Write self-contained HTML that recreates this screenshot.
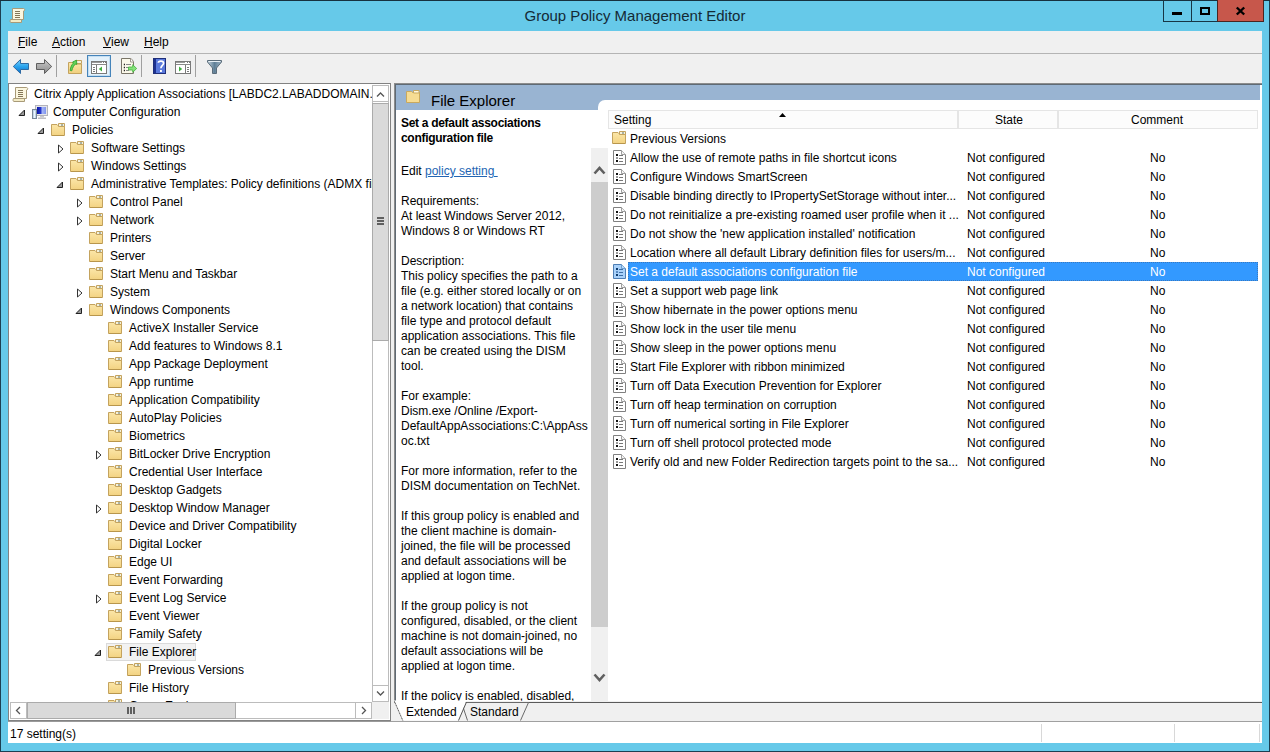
<!DOCTYPE html>
<html><head><meta charset="utf-8"><style>
*{margin:0;padding:0;box-sizing:border-box}
html,body{width:1270px;height:752px;overflow:hidden}
body{position:relative;background:#66c9e9;font-family:"Liberation Sans", sans-serif;font-size:12px;color:#000}
.a{position:absolute}
.ic{position:absolute;display:block}
.tt{position:absolute;margin-top:1px;height:18px;line-height:18px;white-space:nowrap}
.lt{position:absolute;margin-top:1px;height:19px;line-height:19px;white-space:nowrap}
.dt{position:absolute;margin-top:1px;left:401px;height:15px;line-height:15px;white-space:nowrap}
.mn{position:absolute;top:31px;height:22px;line-height:22px}
.mn u{text-decoration:none;border-bottom:1px solid #000;display:inline-block;line-height:10px}
</style></head><body>
<!-- window frame -->
<div class="a" style="left:0;top:0;width:1270px;height:752px;border:1px solid #1c3f52"></div>
<div class="a" style="left:0;top:0;width:1270px;height:1px;background:#17313f"></div>
<!-- title icon -->
<svg class="ic" style="left:9px;top:7px" width="17" height="17" viewBox="0 0 17 17"><path d="M3.5 1.5H14.5C15.5 1.5 16 2.5 15.5 3.5L14.5 4V12.5H3.5Z" fill="#fcf7e0" stroke="#a89a78"/><path d="M1.5 12.5H12.5V15.5H2C1 15.5 0.8 14 1.5 12.5Z" fill="#f3ebc6" stroke="#a89a78"/><path d="M6 4.5h5M6 6.5h5M6 8.5h5M6 10.5h5" stroke="#857758" stroke-width="1.2"/></svg>
<div class="a" style="left:0;top:6px;width:1270px;text-align:center;font-size:15px;line-height:20px;color:#142a36">Group Policy Management Editor</div>
<!-- caption buttons -->
<div class="a" style="left:1163px;top:0;width:29px;height:22px;border:1px solid #173645;border-top:none"></div>
<div class="a" style="left:1172px;top:12px;width:10px;height:3px;background:#000"></div>
<div class="a" style="left:1191px;top:0;width:27px;height:22px;border:1px solid #173645;border-top:none"></div>
<div class="a" style="left:1200px;top:7px;width:10px;height:8px;border:2px solid #000"></div>
<div class="a" style="left:1217px;top:0;width:47px;height:22px;background:#c7574b;border:1px solid #4a2420;border-top:none"></div>
<svg class="ic" style="left:1235px;top:6px" width="11" height="10" viewBox="0 0 11 10"><path d="M1.8 1.5l7.4 7M9.2 1.5l-7.4 7" stroke="#000" stroke-width="2.4"/></svg>

<!-- client -->
<div class="a" style="left:8px;top:31px;width:1254px;height:712px;background:#f0f0f0"></div>
<!-- menu -->
<div class="a" style="left:8px;top:53px;width:1254px;height:1px;background:#b4b4b4"></div>
<div class="mn" style="left:18px"><u>F</u>ile</div>
<div class="mn" style="left:52px"><u>A</u>ction</div>
<div class="mn" style="left:103px"><u>V</u>iew</div>
<div class="mn" style="left:144px"><u>H</u>elp</div>
<!-- toolbar -->
<!-- back -->
<svg class="ic" style="left:10px;top:56px" width="22" height="20" viewBox="10 56 22 20"><defs><linearGradient id="gb" x1="0" y1="0" x2="0" y2="1"><stop offset="0" stop-color="#7fd0fa"/><stop offset="0.5" stop-color="#2aa4ee"/><stop offset="1" stop-color="#0d6fc9"/></linearGradient></defs><path d="M13.3 66.5L20.5 59.5V63.5H28.5V69.5H20.5V73.5Z" fill="url(#gb)" stroke="#2f6aa3" stroke-linejoin="round"/></svg>
<!-- forward -->
<svg class="ic" style="left:33px;top:56px" width="22" height="20" viewBox="33 56 22 20"><defs><linearGradient id="gf" x1="0" y1="0" x2="0" y2="1"><stop offset="0" stop-color="#c9c9c9"/><stop offset="1" stop-color="#8a8a8a"/></linearGradient></defs><path d="M51.7 66.5L44.5 59.5V63.5H36.5V69.5H44.5V73.5Z" fill="url(#gf)" stroke="#5e5e5e" stroke-linejoin="round"/></svg>
<div class="a" style="left:56px;top:55px;width:1px;height:22px;background:#a0a0a0"></div>
<!-- folder up -->
<svg class="ic" style="left:66px;top:57px" width="18" height="18" viewBox="66 57 18 18"><defs><linearGradient id="gy" x1="0" y1="0" x2="0" y2="1"><stop offset="0" stop-color="#fbe6a8"/><stop offset="1" stop-color="#f0cf7e"/></linearGradient></defs><path d="M75.5 60.5H81.5V63.5H75.5Z" fill="#f4f1dc" stroke="#c4a35e"/><path d="M68.5 62.5H73L74.5 64H81.5V73.5H68.5Z" fill="url(#gy)" stroke="#c4a35e"/><path d="M70.2 70.5C70.5 67 71.8 64.5 73.5 63L72.6 62L76.5 60.2L76.8 64.4L75.6 63.9C74 65.2 72.5 67.5 71.8 70.8Z" fill="#62d65a" stroke="#34a32f" stroke-width="0.9" stroke-linejoin="round"/></svg>
<!-- pressed show/hide tree -->
<div class="a" style="left:87px;top:55px;width:24px;height:22px;background:#e3f1fb;border:1px solid #4584ba;box-shadow:inset 0 0 0 1px #c4def2"></div>
<svg class="ic" style="left:90px;top:60px" width="18" height="15" viewBox="90 60 18 15"><rect x="91.5" y="61.5" width="15" height="12" fill="#fff" stroke="#7a7a7a"/><path d="M92 62.5h10" stroke="#9a9a9a"/><path d="M92 64.5h14" stroke="#8a8a8a"/><rect x="103" y="62" width="1" height="1" fill="#777"/><rect x="105" y="62" width="1" height="1" fill="#777"/><path d="M96.5 65v8" stroke="#7a7a7a"/><path d="M93 67.5h2M93 69.5h2M93 71.5h2" stroke="#7a7a7a"/><path d="M102 66.5v5l-3.2-2.5z" fill="#3fae3f"/></svg>
<!-- export list -->
<svg class="ic" style="left:119px;top:56px" width="20" height="19" viewBox="119 56 20 19"><path d="M121.5 58.5h9.5l2.5 3v12h-12z" fill="#fbf8ea" stroke="#7a7568"/><path d="M130.5 58.5v3.5h3" fill="#fff" stroke="#a09a90"/><path d="M123.8 64.5h1.2M123.8 67.5h1.2M123.8 70.5h1.2" stroke="#222" stroke-width="1.3"/><path d="M126 64.5h5M126 67.5h3M126 70.5h3" stroke="#888"/><path d="M128.5 67h4.2v-2.3l4 3.8-4 3.8v-2.3h-4.2z" fill="#84e27a" stroke="#46b03e" stroke-width="0.8" stroke-linejoin="round"/></svg>
<div class="a" style="left:141px;top:55px;width:1px;height:22px;background:#a0a0a0"></div>
<!-- help -->
<svg class="ic" style="left:152px;top:57px" width="16" height="18" viewBox="152 57 16 18"><rect x="153" y="58" width="13" height="16" fill="#3f5cc8"/><rect x="153" y="58" width="3" height="16" fill="#1d318f"/><rect x="156" y="58" width="10" height="16" fill="#5a79dc"/><rect x="153.5" y="58.5" width="12" height="15" fill="none" stroke="#1f2f7a"/><path d="M158.3 62.8C158.3 60.6 163.6 60.2 163.6 63.2C163.6 65.3 160.9 65.6 160.9 68.3" fill="none" stroke="#fff" stroke-width="1.7"/><rect x="160" y="70" width="1.9" height="2" fill="#fff"/></svg>
<!-- action pane -->
<svg class="ic" style="left:174px;top:60px" width="18" height="15" viewBox="174 60 18 15"><rect x="175.5" y="61.5" width="15" height="12" fill="#fff" stroke="#7a7a7a"/><path d="M176 62.5h9" stroke="#9a9a9a"/><path d="M176 64.5h14" stroke="#8a8a8a"/><rect x="187" y="62" width="1" height="1" fill="#777"/><rect x="189" y="62" width="1" height="1" fill="#777"/><path d="M185.5 65v8" stroke="#7a7a7a"/><path d="M187 67.5h2M187 69.5h2M187 71.5h2" stroke="#7a7a7a"/><path d="M179 66.5v5l3.2-2.5z" fill="#3fae3f"/></svg>
<div class="a" style="left:195px;top:55px;width:1px;height:22px;background:#a0a0a0"></div>
<!-- filter -->
<svg class="ic" style="left:205px;top:58px" width="19" height="17" viewBox="205 58 19 17"><defs><linearGradient id="gfl" x1="0" y1="0" x2="1" y2="0"><stop offset="0" stop-color="#c8d6e0"/><stop offset="0.5" stop-color="#5f7f96"/><stop offset="1" stop-color="#9fb4c4"/></linearGradient></defs><path d="M207.5 60.5h14v1.5l-5 6v5.5h-4v-5.5l-5-6z" fill="url(#gfl)" stroke="#5a6c7a" stroke-linejoin="round"/><path d="M208.5 61.5h12" stroke="#e8f0f5"/></svg>


<!-- tree pane -->
<div class="a" style="left:8px;top:83px;width:383px;height:638px;background:#fff;border:1px solid #828282"></div>
<div class="a" style="left:9px;top:84px;width:363px;height:618px;overflow:hidden">
<div class="a" style="left:-9px;top:-84px;width:1270px;height:752px">
<svg class="ic" style="left:12px;top:86px" width="17" height="17" viewBox="0 0 17 17"><path d="M3.5 1.5H14.5C15.5 1.5 16 2.5 15.5 3.5L14.5 4V12.5H3.5Z" fill="#fcf7e0" stroke="#a89a78"/><path d="M1.5 12.5H12.5V15.5H2C1 15.5 0.8 14 1.5 12.5Z" fill="#f3ebc6" stroke="#a89a78"/><path d="M6 4.5h5M6 6.5h5M6 8.5h5M6 10.5h5" stroke="#857758" stroke-width="1.2"/></svg>
<div class="tt" style="left:34px;top:84px">Citrix Apply Application Associations [LABDC2.LABADDOMAIN.COM] Policy</div>
<svg class="ic" style="left:18px;top:109px" width="8" height="8" viewBox="0 0 8 8"><path d="M1 6.5h5.5v-5.5z" fill="#9a9a9a" stroke="#222"/></svg>
<svg class="ic" style="left:32px;top:105px" width="17" height="15" viewBox="0 0 17 15"><defs><linearGradient id="pcs" x1="0" y1="0" x2="1" y2="0"><stop offset="0" stop-color="#0a17a8"/><stop offset="0.45" stop-color="#2a3cd0"/><stop offset="0.55" stop-color="#a9b8f5"/><stop offset="1" stop-color="#7f95ee"/></linearGradient></defs><rect x="3.5" y="0.5" width="12" height="10" fill="#e6e6ea" stroke="#b4b4bc"/><rect x="5" y="2" width="9" height="7" fill="url(#pcs)"/><rect x="8" y="11" width="4" height="1.5" fill="#c8c8cc"/><rect x="6" y="12.5" width="8" height="1.5" fill="#c0c0c4"/><rect x="0.5" y="4.5" width="4" height="9" fill="#c4d8ea" stroke="#7a8898"/><path d="M2.5 6v7" stroke="#f0f8ff"/></svg>
<div class="tt" style="left:53px;top:102px">Computer Configuration</div>
<svg class="ic" style="left:37px;top:127px" width="8" height="8" viewBox="0 0 8 8"><path d="M1 6.5h5.5v-5.5z" fill="#9a9a9a" stroke="#222"/></svg>
<svg class="ic" style="left:51px;top:123px" width="14" height="13" viewBox="0 0 14 13"><defs><linearGradient id="fg" x1="0" y1="0" x2="0" y2="1"><stop offset="0" stop-color="#fbe6a8"/><stop offset="1" stop-color="#f3d382"/></linearGradient></defs><path d="M0.5 1.5H6L7.5 3H13.5V12.5H0.5Z" fill="url(#fg)" stroke="#c4a35e"/><path d="M7.5 0.5H13.5V3.5H7.5Z" fill="#f4f1dc" stroke="#c4a35e"/><rect x="10" y="1" width="2" height="2" fill="#aab2a4"/><path d="M1 12.5H13" stroke="#b8964c"/></svg>
<div class="tt" style="left:72px;top:120px">Policies</div>
<svg class="ic" style="left:57px;top:144px" width="8" height="10" viewBox="0 0 8 10"><path d="M1.5 1v8l4.5-4z" fill="#fff" stroke="#333"/></svg>
<svg class="ic" style="left:70px;top:141px" width="14" height="13" viewBox="0 0 14 13"><defs><linearGradient id="fg" x1="0" y1="0" x2="0" y2="1"><stop offset="0" stop-color="#fbe6a8"/><stop offset="1" stop-color="#f3d382"/></linearGradient></defs><path d="M0.5 1.5H6L7.5 3H13.5V12.5H0.5Z" fill="url(#fg)" stroke="#c4a35e"/><path d="M7.5 0.5H13.5V3.5H7.5Z" fill="#f4f1dc" stroke="#c4a35e"/><rect x="10" y="1" width="2" height="2" fill="#aab2a4"/><path d="M1 12.5H13" stroke="#b8964c"/></svg>
<div class="tt" style="left:91px;top:138px">Software Settings</div>
<svg class="ic" style="left:57px;top:162px" width="8" height="10" viewBox="0 0 8 10"><path d="M1.5 1v8l4.5-4z" fill="#fff" stroke="#333"/></svg>
<svg class="ic" style="left:70px;top:159px" width="14" height="13" viewBox="0 0 14 13"><defs><linearGradient id="fg" x1="0" y1="0" x2="0" y2="1"><stop offset="0" stop-color="#fbe6a8"/><stop offset="1" stop-color="#f3d382"/></linearGradient></defs><path d="M0.5 1.5H6L7.5 3H13.5V12.5H0.5Z" fill="url(#fg)" stroke="#c4a35e"/><path d="M7.5 0.5H13.5V3.5H7.5Z" fill="#f4f1dc" stroke="#c4a35e"/><rect x="10" y="1" width="2" height="2" fill="#aab2a4"/><path d="M1 12.5H13" stroke="#b8964c"/></svg>
<div class="tt" style="left:91px;top:156px">Windows Settings</div>
<svg class="ic" style="left:56px;top:181px" width="8" height="8" viewBox="0 0 8 8"><path d="M1 6.5h5.5v-5.5z" fill="#9a9a9a" stroke="#222"/></svg>
<svg class="ic" style="left:70px;top:177px" width="14" height="13" viewBox="0 0 14 13"><defs><linearGradient id="fg" x1="0" y1="0" x2="0" y2="1"><stop offset="0" stop-color="#fbe6a8"/><stop offset="1" stop-color="#f3d382"/></linearGradient></defs><path d="M0.5 1.5H6L7.5 3H13.5V12.5H0.5Z" fill="url(#fg)" stroke="#c4a35e"/><path d="M7.5 0.5H13.5V3.5H7.5Z" fill="#f4f1dc" stroke="#c4a35e"/><rect x="10" y="1" width="2" height="2" fill="#aab2a4"/><path d="M1 12.5H13" stroke="#b8964c"/></svg>
<div class="tt" style="left:91px;top:174px">Administrative Templates: Policy definitions (ADMX files) retrieved from the local computer</div>
<svg class="ic" style="left:76px;top:198px" width="8" height="10" viewBox="0 0 8 10"><path d="M1.5 1v8l4.5-4z" fill="#fff" stroke="#333"/></svg>
<svg class="ic" style="left:89px;top:195px" width="14" height="13" viewBox="0 0 14 13"><defs><linearGradient id="fg" x1="0" y1="0" x2="0" y2="1"><stop offset="0" stop-color="#fbe6a8"/><stop offset="1" stop-color="#f3d382"/></linearGradient></defs><path d="M0.5 1.5H6L7.5 3H13.5V12.5H0.5Z" fill="url(#fg)" stroke="#c4a35e"/><path d="M7.5 0.5H13.5V3.5H7.5Z" fill="#f4f1dc" stroke="#c4a35e"/><rect x="10" y="1" width="2" height="2" fill="#aab2a4"/><path d="M1 12.5H13" stroke="#b8964c"/></svg>
<div class="tt" style="left:110px;top:192px">Control Panel</div>
<svg class="ic" style="left:76px;top:216px" width="8" height="10" viewBox="0 0 8 10"><path d="M1.5 1v8l4.5-4z" fill="#fff" stroke="#333"/></svg>
<svg class="ic" style="left:89px;top:213px" width="14" height="13" viewBox="0 0 14 13"><defs><linearGradient id="fg" x1="0" y1="0" x2="0" y2="1"><stop offset="0" stop-color="#fbe6a8"/><stop offset="1" stop-color="#f3d382"/></linearGradient></defs><path d="M0.5 1.5H6L7.5 3H13.5V12.5H0.5Z" fill="url(#fg)" stroke="#c4a35e"/><path d="M7.5 0.5H13.5V3.5H7.5Z" fill="#f4f1dc" stroke="#c4a35e"/><rect x="10" y="1" width="2" height="2" fill="#aab2a4"/><path d="M1 12.5H13" stroke="#b8964c"/></svg>
<div class="tt" style="left:110px;top:210px">Network</div>
<svg class="ic" style="left:89px;top:231px" width="14" height="13" viewBox="0 0 14 13"><defs><linearGradient id="fg" x1="0" y1="0" x2="0" y2="1"><stop offset="0" stop-color="#fbe6a8"/><stop offset="1" stop-color="#f3d382"/></linearGradient></defs><path d="M0.5 1.5H6L7.5 3H13.5V12.5H0.5Z" fill="url(#fg)" stroke="#c4a35e"/><path d="M7.5 0.5H13.5V3.5H7.5Z" fill="#f4f1dc" stroke="#c4a35e"/><rect x="10" y="1" width="2" height="2" fill="#aab2a4"/><path d="M1 12.5H13" stroke="#b8964c"/></svg>
<div class="tt" style="left:110px;top:228px">Printers</div>
<svg class="ic" style="left:89px;top:249px" width="14" height="13" viewBox="0 0 14 13"><defs><linearGradient id="fg" x1="0" y1="0" x2="0" y2="1"><stop offset="0" stop-color="#fbe6a8"/><stop offset="1" stop-color="#f3d382"/></linearGradient></defs><path d="M0.5 1.5H6L7.5 3H13.5V12.5H0.5Z" fill="url(#fg)" stroke="#c4a35e"/><path d="M7.5 0.5H13.5V3.5H7.5Z" fill="#f4f1dc" stroke="#c4a35e"/><rect x="10" y="1" width="2" height="2" fill="#aab2a4"/><path d="M1 12.5H13" stroke="#b8964c"/></svg>
<div class="tt" style="left:110px;top:246px">Server</div>
<svg class="ic" style="left:89px;top:267px" width="14" height="13" viewBox="0 0 14 13"><defs><linearGradient id="fg" x1="0" y1="0" x2="0" y2="1"><stop offset="0" stop-color="#fbe6a8"/><stop offset="1" stop-color="#f3d382"/></linearGradient></defs><path d="M0.5 1.5H6L7.5 3H13.5V12.5H0.5Z" fill="url(#fg)" stroke="#c4a35e"/><path d="M7.5 0.5H13.5V3.5H7.5Z" fill="#f4f1dc" stroke="#c4a35e"/><rect x="10" y="1" width="2" height="2" fill="#aab2a4"/><path d="M1 12.5H13" stroke="#b8964c"/></svg>
<div class="tt" style="left:110px;top:264px">Start Menu and Taskbar</div>
<svg class="ic" style="left:76px;top:288px" width="8" height="10" viewBox="0 0 8 10"><path d="M1.5 1v8l4.5-4z" fill="#fff" stroke="#333"/></svg>
<svg class="ic" style="left:89px;top:285px" width="14" height="13" viewBox="0 0 14 13"><defs><linearGradient id="fg" x1="0" y1="0" x2="0" y2="1"><stop offset="0" stop-color="#fbe6a8"/><stop offset="1" stop-color="#f3d382"/></linearGradient></defs><path d="M0.5 1.5H6L7.5 3H13.5V12.5H0.5Z" fill="url(#fg)" stroke="#c4a35e"/><path d="M7.5 0.5H13.5V3.5H7.5Z" fill="#f4f1dc" stroke="#c4a35e"/><rect x="10" y="1" width="2" height="2" fill="#aab2a4"/><path d="M1 12.5H13" stroke="#b8964c"/></svg>
<div class="tt" style="left:110px;top:282px">System</div>
<svg class="ic" style="left:75px;top:307px" width="8" height="8" viewBox="0 0 8 8"><path d="M1 6.5h5.5v-5.5z" fill="#9a9a9a" stroke="#222"/></svg>
<svg class="ic" style="left:89px;top:303px" width="14" height="13" viewBox="0 0 14 13"><defs><linearGradient id="fg" x1="0" y1="0" x2="0" y2="1"><stop offset="0" stop-color="#fbe6a8"/><stop offset="1" stop-color="#f3d382"/></linearGradient></defs><path d="M0.5 1.5H6L7.5 3H13.5V12.5H0.5Z" fill="url(#fg)" stroke="#c4a35e"/><path d="M7.5 0.5H13.5V3.5H7.5Z" fill="#f4f1dc" stroke="#c4a35e"/><rect x="10" y="1" width="2" height="2" fill="#aab2a4"/><path d="M1 12.5H13" stroke="#b8964c"/></svg>
<div class="tt" style="left:110px;top:300px">Windows Components</div>
<svg class="ic" style="left:108px;top:321px" width="14" height="13" viewBox="0 0 14 13"><defs><linearGradient id="fg" x1="0" y1="0" x2="0" y2="1"><stop offset="0" stop-color="#fbe6a8"/><stop offset="1" stop-color="#f3d382"/></linearGradient></defs><path d="M0.5 1.5H6L7.5 3H13.5V12.5H0.5Z" fill="url(#fg)" stroke="#c4a35e"/><path d="M7.5 0.5H13.5V3.5H7.5Z" fill="#f4f1dc" stroke="#c4a35e"/><rect x="10" y="1" width="2" height="2" fill="#aab2a4"/><path d="M1 12.5H13" stroke="#b8964c"/></svg>
<div class="tt" style="left:129px;top:318px">ActiveX Installer Service</div>
<svg class="ic" style="left:108px;top:339px" width="14" height="13" viewBox="0 0 14 13"><defs><linearGradient id="fg" x1="0" y1="0" x2="0" y2="1"><stop offset="0" stop-color="#fbe6a8"/><stop offset="1" stop-color="#f3d382"/></linearGradient></defs><path d="M0.5 1.5H6L7.5 3H13.5V12.5H0.5Z" fill="url(#fg)" stroke="#c4a35e"/><path d="M7.5 0.5H13.5V3.5H7.5Z" fill="#f4f1dc" stroke="#c4a35e"/><rect x="10" y="1" width="2" height="2" fill="#aab2a4"/><path d="M1 12.5H13" stroke="#b8964c"/></svg>
<div class="tt" style="left:129px;top:336px">Add features to Windows 8.1</div>
<svg class="ic" style="left:108px;top:357px" width="14" height="13" viewBox="0 0 14 13"><defs><linearGradient id="fg" x1="0" y1="0" x2="0" y2="1"><stop offset="0" stop-color="#fbe6a8"/><stop offset="1" stop-color="#f3d382"/></linearGradient></defs><path d="M0.5 1.5H6L7.5 3H13.5V12.5H0.5Z" fill="url(#fg)" stroke="#c4a35e"/><path d="M7.5 0.5H13.5V3.5H7.5Z" fill="#f4f1dc" stroke="#c4a35e"/><rect x="10" y="1" width="2" height="2" fill="#aab2a4"/><path d="M1 12.5H13" stroke="#b8964c"/></svg>
<div class="tt" style="left:129px;top:354px">App Package Deployment</div>
<svg class="ic" style="left:108px;top:375px" width="14" height="13" viewBox="0 0 14 13"><defs><linearGradient id="fg" x1="0" y1="0" x2="0" y2="1"><stop offset="0" stop-color="#fbe6a8"/><stop offset="1" stop-color="#f3d382"/></linearGradient></defs><path d="M0.5 1.5H6L7.5 3H13.5V12.5H0.5Z" fill="url(#fg)" stroke="#c4a35e"/><path d="M7.5 0.5H13.5V3.5H7.5Z" fill="#f4f1dc" stroke="#c4a35e"/><rect x="10" y="1" width="2" height="2" fill="#aab2a4"/><path d="M1 12.5H13" stroke="#b8964c"/></svg>
<div class="tt" style="left:129px;top:372px">App runtime</div>
<svg class="ic" style="left:108px;top:393px" width="14" height="13" viewBox="0 0 14 13"><defs><linearGradient id="fg" x1="0" y1="0" x2="0" y2="1"><stop offset="0" stop-color="#fbe6a8"/><stop offset="1" stop-color="#f3d382"/></linearGradient></defs><path d="M0.5 1.5H6L7.5 3H13.5V12.5H0.5Z" fill="url(#fg)" stroke="#c4a35e"/><path d="M7.5 0.5H13.5V3.5H7.5Z" fill="#f4f1dc" stroke="#c4a35e"/><rect x="10" y="1" width="2" height="2" fill="#aab2a4"/><path d="M1 12.5H13" stroke="#b8964c"/></svg>
<div class="tt" style="left:129px;top:390px">Application Compatibility</div>
<svg class="ic" style="left:108px;top:411px" width="14" height="13" viewBox="0 0 14 13"><defs><linearGradient id="fg" x1="0" y1="0" x2="0" y2="1"><stop offset="0" stop-color="#fbe6a8"/><stop offset="1" stop-color="#f3d382"/></linearGradient></defs><path d="M0.5 1.5H6L7.5 3H13.5V12.5H0.5Z" fill="url(#fg)" stroke="#c4a35e"/><path d="M7.5 0.5H13.5V3.5H7.5Z" fill="#f4f1dc" stroke="#c4a35e"/><rect x="10" y="1" width="2" height="2" fill="#aab2a4"/><path d="M1 12.5H13" stroke="#b8964c"/></svg>
<div class="tt" style="left:129px;top:408px">AutoPlay Policies</div>
<svg class="ic" style="left:108px;top:429px" width="14" height="13" viewBox="0 0 14 13"><defs><linearGradient id="fg" x1="0" y1="0" x2="0" y2="1"><stop offset="0" stop-color="#fbe6a8"/><stop offset="1" stop-color="#f3d382"/></linearGradient></defs><path d="M0.5 1.5H6L7.5 3H13.5V12.5H0.5Z" fill="url(#fg)" stroke="#c4a35e"/><path d="M7.5 0.5H13.5V3.5H7.5Z" fill="#f4f1dc" stroke="#c4a35e"/><rect x="10" y="1" width="2" height="2" fill="#aab2a4"/><path d="M1 12.5H13" stroke="#b8964c"/></svg>
<div class="tt" style="left:129px;top:426px">Biometrics</div>
<svg class="ic" style="left:95px;top:450px" width="8" height="10" viewBox="0 0 8 10"><path d="M1.5 1v8l4.5-4z" fill="#fff" stroke="#333"/></svg>
<svg class="ic" style="left:108px;top:447px" width="14" height="13" viewBox="0 0 14 13"><defs><linearGradient id="fg" x1="0" y1="0" x2="0" y2="1"><stop offset="0" stop-color="#fbe6a8"/><stop offset="1" stop-color="#f3d382"/></linearGradient></defs><path d="M0.5 1.5H6L7.5 3H13.5V12.5H0.5Z" fill="url(#fg)" stroke="#c4a35e"/><path d="M7.5 0.5H13.5V3.5H7.5Z" fill="#f4f1dc" stroke="#c4a35e"/><rect x="10" y="1" width="2" height="2" fill="#aab2a4"/><path d="M1 12.5H13" stroke="#b8964c"/></svg>
<div class="tt" style="left:129px;top:444px">BitLocker Drive Encryption</div>
<svg class="ic" style="left:108px;top:465px" width="14" height="13" viewBox="0 0 14 13"><defs><linearGradient id="fg" x1="0" y1="0" x2="0" y2="1"><stop offset="0" stop-color="#fbe6a8"/><stop offset="1" stop-color="#f3d382"/></linearGradient></defs><path d="M0.5 1.5H6L7.5 3H13.5V12.5H0.5Z" fill="url(#fg)" stroke="#c4a35e"/><path d="M7.5 0.5H13.5V3.5H7.5Z" fill="#f4f1dc" stroke="#c4a35e"/><rect x="10" y="1" width="2" height="2" fill="#aab2a4"/><path d="M1 12.5H13" stroke="#b8964c"/></svg>
<div class="tt" style="left:129px;top:462px">Credential User Interface</div>
<svg class="ic" style="left:108px;top:483px" width="14" height="13" viewBox="0 0 14 13"><defs><linearGradient id="fg" x1="0" y1="0" x2="0" y2="1"><stop offset="0" stop-color="#fbe6a8"/><stop offset="1" stop-color="#f3d382"/></linearGradient></defs><path d="M0.5 1.5H6L7.5 3H13.5V12.5H0.5Z" fill="url(#fg)" stroke="#c4a35e"/><path d="M7.5 0.5H13.5V3.5H7.5Z" fill="#f4f1dc" stroke="#c4a35e"/><rect x="10" y="1" width="2" height="2" fill="#aab2a4"/><path d="M1 12.5H13" stroke="#b8964c"/></svg>
<div class="tt" style="left:129px;top:480px">Desktop Gadgets</div>
<svg class="ic" style="left:95px;top:504px" width="8" height="10" viewBox="0 0 8 10"><path d="M1.5 1v8l4.5-4z" fill="#fff" stroke="#333"/></svg>
<svg class="ic" style="left:108px;top:501px" width="14" height="13" viewBox="0 0 14 13"><defs><linearGradient id="fg" x1="0" y1="0" x2="0" y2="1"><stop offset="0" stop-color="#fbe6a8"/><stop offset="1" stop-color="#f3d382"/></linearGradient></defs><path d="M0.5 1.5H6L7.5 3H13.5V12.5H0.5Z" fill="url(#fg)" stroke="#c4a35e"/><path d="M7.5 0.5H13.5V3.5H7.5Z" fill="#f4f1dc" stroke="#c4a35e"/><rect x="10" y="1" width="2" height="2" fill="#aab2a4"/><path d="M1 12.5H13" stroke="#b8964c"/></svg>
<div class="tt" style="left:129px;top:498px">Desktop Window Manager</div>
<svg class="ic" style="left:108px;top:519px" width="14" height="13" viewBox="0 0 14 13"><defs><linearGradient id="fg" x1="0" y1="0" x2="0" y2="1"><stop offset="0" stop-color="#fbe6a8"/><stop offset="1" stop-color="#f3d382"/></linearGradient></defs><path d="M0.5 1.5H6L7.5 3H13.5V12.5H0.5Z" fill="url(#fg)" stroke="#c4a35e"/><path d="M7.5 0.5H13.5V3.5H7.5Z" fill="#f4f1dc" stroke="#c4a35e"/><rect x="10" y="1" width="2" height="2" fill="#aab2a4"/><path d="M1 12.5H13" stroke="#b8964c"/></svg>
<div class="tt" style="left:129px;top:516px">Device and Driver Compatibility</div>
<svg class="ic" style="left:108px;top:537px" width="14" height="13" viewBox="0 0 14 13"><defs><linearGradient id="fg" x1="0" y1="0" x2="0" y2="1"><stop offset="0" stop-color="#fbe6a8"/><stop offset="1" stop-color="#f3d382"/></linearGradient></defs><path d="M0.5 1.5H6L7.5 3H13.5V12.5H0.5Z" fill="url(#fg)" stroke="#c4a35e"/><path d="M7.5 0.5H13.5V3.5H7.5Z" fill="#f4f1dc" stroke="#c4a35e"/><rect x="10" y="1" width="2" height="2" fill="#aab2a4"/><path d="M1 12.5H13" stroke="#b8964c"/></svg>
<div class="tt" style="left:129px;top:534px">Digital Locker</div>
<svg class="ic" style="left:108px;top:555px" width="14" height="13" viewBox="0 0 14 13"><defs><linearGradient id="fg" x1="0" y1="0" x2="0" y2="1"><stop offset="0" stop-color="#fbe6a8"/><stop offset="1" stop-color="#f3d382"/></linearGradient></defs><path d="M0.5 1.5H6L7.5 3H13.5V12.5H0.5Z" fill="url(#fg)" stroke="#c4a35e"/><path d="M7.5 0.5H13.5V3.5H7.5Z" fill="#f4f1dc" stroke="#c4a35e"/><rect x="10" y="1" width="2" height="2" fill="#aab2a4"/><path d="M1 12.5H13" stroke="#b8964c"/></svg>
<div class="tt" style="left:129px;top:552px">Edge UI</div>
<svg class="ic" style="left:108px;top:573px" width="14" height="13" viewBox="0 0 14 13"><defs><linearGradient id="fg" x1="0" y1="0" x2="0" y2="1"><stop offset="0" stop-color="#fbe6a8"/><stop offset="1" stop-color="#f3d382"/></linearGradient></defs><path d="M0.5 1.5H6L7.5 3H13.5V12.5H0.5Z" fill="url(#fg)" stroke="#c4a35e"/><path d="M7.5 0.5H13.5V3.5H7.5Z" fill="#f4f1dc" stroke="#c4a35e"/><rect x="10" y="1" width="2" height="2" fill="#aab2a4"/><path d="M1 12.5H13" stroke="#b8964c"/></svg>
<div class="tt" style="left:129px;top:570px">Event Forwarding</div>
<svg class="ic" style="left:95px;top:594px" width="8" height="10" viewBox="0 0 8 10"><path d="M1.5 1v8l4.5-4z" fill="#fff" stroke="#333"/></svg>
<svg class="ic" style="left:108px;top:591px" width="14" height="13" viewBox="0 0 14 13"><defs><linearGradient id="fg" x1="0" y1="0" x2="0" y2="1"><stop offset="0" stop-color="#fbe6a8"/><stop offset="1" stop-color="#f3d382"/></linearGradient></defs><path d="M0.5 1.5H6L7.5 3H13.5V12.5H0.5Z" fill="url(#fg)" stroke="#c4a35e"/><path d="M7.5 0.5H13.5V3.5H7.5Z" fill="#f4f1dc" stroke="#c4a35e"/><rect x="10" y="1" width="2" height="2" fill="#aab2a4"/><path d="M1 12.5H13" stroke="#b8964c"/></svg>
<div class="tt" style="left:129px;top:588px">Event Log Service</div>
<svg class="ic" style="left:108px;top:609px" width="14" height="13" viewBox="0 0 14 13"><defs><linearGradient id="fg" x1="0" y1="0" x2="0" y2="1"><stop offset="0" stop-color="#fbe6a8"/><stop offset="1" stop-color="#f3d382"/></linearGradient></defs><path d="M0.5 1.5H6L7.5 3H13.5V12.5H0.5Z" fill="url(#fg)" stroke="#c4a35e"/><path d="M7.5 0.5H13.5V3.5H7.5Z" fill="#f4f1dc" stroke="#c4a35e"/><rect x="10" y="1" width="2" height="2" fill="#aab2a4"/><path d="M1 12.5H13" stroke="#b8964c"/></svg>
<div class="tt" style="left:129px;top:606px">Event Viewer</div>
<svg class="ic" style="left:108px;top:627px" width="14" height="13" viewBox="0 0 14 13"><defs><linearGradient id="fg" x1="0" y1="0" x2="0" y2="1"><stop offset="0" stop-color="#fbe6a8"/><stop offset="1" stop-color="#f3d382"/></linearGradient></defs><path d="M0.5 1.5H6L7.5 3H13.5V12.5H0.5Z" fill="url(#fg)" stroke="#c4a35e"/><path d="M7.5 0.5H13.5V3.5H7.5Z" fill="#f4f1dc" stroke="#c4a35e"/><rect x="10" y="1" width="2" height="2" fill="#aab2a4"/><path d="M1 12.5H13" stroke="#b8964c"/></svg>
<div class="tt" style="left:129px;top:624px">Family Safety</div>
<svg class="ic" style="left:94px;top:649px" width="8" height="8" viewBox="0 0 8 8"><path d="M1 6.5h5.5v-5.5z" fill="#9a9a9a" stroke="#222"/></svg>
<div style="position:absolute;left:106px;top:643px;width:90px;height:18px;background:#f2f2f2;border:1px solid #dadada"></div>
<svg class="ic" style="left:108px;top:645px" width="14" height="13" viewBox="0 0 14 13"><defs><linearGradient id="fg" x1="0" y1="0" x2="0" y2="1"><stop offset="0" stop-color="#fbe6a8"/><stop offset="1" stop-color="#f3d382"/></linearGradient></defs><path d="M0.5 1.5H6L7.5 3H13.5V12.5H0.5Z" fill="url(#fg)" stroke="#c4a35e"/><path d="M7.5 0.5H13.5V3.5H7.5Z" fill="#f4f1dc" stroke="#c4a35e"/><rect x="10" y="1" width="2" height="2" fill="#aab2a4"/><path d="M1 12.5H13" stroke="#b8964c"/></svg>
<div class="tt" style="left:129px;top:642px">File Explorer</div>
<svg class="ic" style="left:127px;top:663px" width="14" height="13" viewBox="0 0 14 13"><defs><linearGradient id="fg" x1="0" y1="0" x2="0" y2="1"><stop offset="0" stop-color="#fbe6a8"/><stop offset="1" stop-color="#f3d382"/></linearGradient></defs><path d="M0.5 1.5H6L7.5 3H13.5V12.5H0.5Z" fill="url(#fg)" stroke="#c4a35e"/><path d="M7.5 0.5H13.5V3.5H7.5Z" fill="#f4f1dc" stroke="#c4a35e"/><rect x="10" y="1" width="2" height="2" fill="#aab2a4"/><path d="M1 12.5H13" stroke="#b8964c"/></svg>
<div class="tt" style="left:148px;top:660px">Previous Versions</div>
<svg class="ic" style="left:108px;top:681px" width="14" height="13" viewBox="0 0 14 13"><defs><linearGradient id="fg" x1="0" y1="0" x2="0" y2="1"><stop offset="0" stop-color="#fbe6a8"/><stop offset="1" stop-color="#f3d382"/></linearGradient></defs><path d="M0.5 1.5H6L7.5 3H13.5V12.5H0.5Z" fill="url(#fg)" stroke="#c4a35e"/><path d="M7.5 0.5H13.5V3.5H7.5Z" fill="#f4f1dc" stroke="#c4a35e"/><rect x="10" y="1" width="2" height="2" fill="#aab2a4"/><path d="M1 12.5H13" stroke="#b8964c"/></svg>
<div class="tt" style="left:129px;top:678px">File History</div>
<svg class="ic" style="left:108px;top:699px" width="14" height="13" viewBox="0 0 14 13"><defs><linearGradient id="fg" x1="0" y1="0" x2="0" y2="1"><stop offset="0" stop-color="#fbe6a8"/><stop offset="1" stop-color="#f3d382"/></linearGradient></defs><path d="M0.5 1.5H6L7.5 3H13.5V12.5H0.5Z" fill="url(#fg)" stroke="#c4a35e"/><path d="M7.5 0.5H13.5V3.5H7.5Z" fill="#f4f1dc" stroke="#c4a35e"/><rect x="10" y="1" width="2" height="2" fill="#aab2a4"/><path d="M1 12.5H13" stroke="#b8964c"/></svg>
<div class="tt" style="left:129px;top:696px">Game Explorer</div>
</div></div>
<!-- tree vscroll -->
<div class="a" style="left:372px;top:85px;width:17px;height:617px;background:#fff;border-left:1px solid #bcbcbc;border-right:1px solid #bcbcbc"></div>
<div class="a" style="left:372px;top:702px;width:17px;height:17px;background:#f0f0f0"></div>
<div class="a" style="left:372px;top:85px;width:17px;height:17px;background:#fff;border:1px solid #bcbcbc"></div>
<svg class="ic" style="left:376px;top:91px" width="9" height="7" viewBox="0 0 9 7"><path d="M1 5.5l3.5-3.5 3.5 3.5" fill="none" stroke="#555" stroke-width="1.3"/></svg>
<div class="a" style="left:372px;top:103px;width:17px;height:238px;background:#dadada;border:1px solid #ababab"></div>
<div class="a" style="left:377px;top:217px;width:7px;height:2px;background:#606060"></div>
<div class="a" style="left:377px;top:220px;width:7px;height:2px;background:#606060"></div>
<div class="a" style="left:377px;top:223px;width:7px;height:2px;background:#606060"></div>
<div class="a" style="left:372px;top:685px;width:17px;height:17px;background:#fff;border:1px solid #bcbcbc"></div>
<svg class="ic" style="left:376px;top:690px" width="9" height="7" viewBox="0 0 9 7"><path d="M1 1.5l3.5 3.5 3.5-3.5" fill="none" stroke="#555" stroke-width="1.3"/></svg>
<!-- tree hscroll -->
<div class="a" style="left:10px;top:702px;width:362px;height:17px;background:#fff;border-top:1px solid #bcbcbc;border-bottom:1px solid #bcbcbc"></div>
<div class="a" style="left:10px;top:702px;width:17px;height:17px;background:#fff;border:1px solid #bcbcbc"></div>
<svg class="ic" style="left:15px;top:706px" width="6" height="9" viewBox="0 0 6 9"><path d="M5 1l-3.5 3.5 3.5 3.5" fill="none" stroke="#555" stroke-width="1.3"/></svg>
<div class="a" style="left:27px;top:702px;width:209px;height:17px;background:#dadada;border:1px solid #ababab"></div>
<div class="a" style="left:127px;top:707px;width:2px;height:7px;background:#606060"></div>
<div class="a" style="left:130px;top:707px;width:2px;height:7px;background:#606060"></div>
<div class="a" style="left:133px;top:707px;width:2px;height:7px;background:#606060"></div>
<div class="a" style="left:355px;top:702px;width:17px;height:17px;background:#fff;border:1px solid #bcbcbc"></div>
<svg class="ic" style="left:361px;top:706px" width="6" height="9" viewBox="0 0 6 9"><path d="M1 1l3.5 3.5-3.5 3.5" fill="none" stroke="#555" stroke-width="1.3"/></svg>

<!-- right container -->
<div class="a" style="left:394px;top:83px;width:868px;height:620px;background:#fff;border-left:1px solid #8c8c8c;border-top:1px solid #8c8c8c"></div>
<div class="a" style="left:395px;top:84px;width:867px;height:1px;background:#5f6a74"></div>
<div class="a" style="left:395px;top:84px;width:1px;height:617px;background:#5f6a74"></div>
<div class="a" style="left:396px;top:85px;width:864px;height:25px;background:#99b4d2"></div>
<div class="a" style="left:598px;top:100px;width:662px;height:12px;background:#fff;border-top-left-radius:7px"></div>
<svg class="ic" style="left:405px;top:89px" width="16" height="16" viewBox="0 0 16 16"><path d="M1.5 2.5h5l1 1h7v10h-13z" fill="#f6dc93" stroke="#c9a95e"/><path d="M8.5 1.5h5.5v2.5h-5.5z" fill="#fff8e0" stroke="#c9a95e"/></svg>
<div class="a" style="left:431px;top:91px;font-size:15px;line-height:20px;color:#000">File Explorer</div>

<!-- description -->
<div class="a" style="left:396px;top:110px;width:195px;height:591px;overflow:hidden">
<div class="a" style="left:-396px;top:-110px;width:1270px;height:752px">
<div class="dt" style="top:115px;font-weight:bold;letter-spacing:-0.3px">Set a default associations</div>
<div class="dt" style="top:130px;font-weight:bold;letter-spacing:-0.3px">configuration file</div>
<div class="dt" style="top:163px">Edit <span style="color:#2365b3;text-decoration:underline">policy setting&nbsp;</span></div>
<div class="dt" style="top:193px">Requirements:</div>
<div class="dt" style="top:208px">At least Windows Server 2012,</div>
<div class="dt" style="top:223px">Windows 8 or Windows RT</div>
<div class="dt" style="top:253px">Description:</div>
<div class="dt" style="top:268px">This policy specifies the path to a</div>
<div class="dt" style="top:283px">file (e.g. either stored locally or on</div>
<div class="dt" style="top:298px">a network location) that contains</div>
<div class="dt" style="top:313px">file type and protocol default</div>
<div class="dt" style="top:328px">application associations. This file</div>
<div class="dt" style="top:343px">can be created using the DISM</div>
<div class="dt" style="top:358px">tool.</div>
<div class="dt" style="top:388px">For example:</div>
<div class="dt" style="top:403px">Dism.exe /Online /Export-</div>
<div class="dt" style="top:418px">DefaultAppAssociations:C:\AppAss</div>
<div class="dt" style="top:433px">oc.txt</div>
<div class="dt" style="top:463px">For more information, refer to the</div>
<div class="dt" style="top:478px">DISM documentation on TechNet.</div>
<div class="dt" style="top:508px">If this group policy is enabled and</div>
<div class="dt" style="top:523px">the client machine is domain-</div>
<div class="dt" style="top:538px">joined, the file will be processed</div>
<div class="dt" style="top:553px">and default associations will be</div>
<div class="dt" style="top:568px">applied at logon time.</div>
<div class="dt" style="top:598px">If the group policy is not</div>
<div class="dt" style="top:613px">configured, disabled, or the client</div>
<div class="dt" style="top:628px">machine is not domain-joined, no</div>
<div class="dt" style="top:643px">default associations will be</div>
<div class="dt" style="top:658px">applied at logon time.</div>
<div class="dt" style="top:688px">If the policy is enabled, disabled,</div>
</div></div>
<!-- middle vscroll -->
<div class="a" style="left:591px;top:148px;width:17px;height:553px;background:#f0f0f0"></div>
<div class="a" style="left:591px;top:182px;width:17px;height:445px;background:#cdcdcd"></div>
<svg class="ic" style="left:593px;top:164px" width="13" height="11" viewBox="0 0 13 11"><path d="M1.5 9.5l5-5.5 5 5.5" fill="none" stroke="#606060" stroke-width="2.6"/></svg>
<svg class="ic" style="left:593px;top:673px" width="13" height="11" viewBox="0 0 13 11"><path d="M1.5 1.5l5 5.5 5-5.5" fill="none" stroke="#606060" stroke-width="2.6"/></svg>

<!-- list header -->
<div class="a" style="left:608px;top:110px;width:650px;height:19px;background:#fcfcfc;border:1px solid #e5e5e5"></div>
<div class="a" style="left:957px;top:110px;width:2px;height:19px;background:#e5e5e5"></div>
<div class="a" style="left:1057px;top:110px;width:2px;height:19px;background:#e5e5e5"></div>
<div class="lt" style="left:614px;top:110px">Setting</div>
<div class="lt" style="left:995px;top:110px">State</div>
<div class="lt" style="left:1131px;top:110px">Comment</div>
<svg class="ic" style="left:779px;top:113px" width="7" height="4" viewBox="0 0 7 4"><path d="M0 4l3.5-4 3.5 4z" fill="#000"/></svg>
<svg class="ic" style="left:612px;top:131px" width="14" height="13" viewBox="0 0 14 13"><defs><linearGradient id="fg" x1="0" y1="0" x2="0" y2="1"><stop offset="0" stop-color="#fbe6a8"/><stop offset="1" stop-color="#f3d382"/></linearGradient></defs><path d="M0.5 1.5H6L7.5 3H13.5V12.5H0.5Z" fill="url(#fg)" stroke="#c4a35e"/><path d="M7.5 0.5H13.5V3.5H7.5Z" fill="#f4f1dc" stroke="#c4a35e"/><rect x="10" y="1" width="2" height="2" fill="#aab2a4"/><path d="M1 12.5H13" stroke="#b8964c"/></svg>
<div class="lt" style="left:630px;top:129px">Previous Versions</div>
<svg class="ic" style="left:613px;top:150px" width="14" height="16" viewBox="0 0 14 16"><path d="M0.5 0.5h8l4 4v10h-12z" fill="#fff" stroke="#808080"/><path d="M8.5 0.5v4h4" fill="#f4f4f4" stroke="#a0a0a0"/><rect x="3" y="4" width="2" height="2" fill="#111"/><rect x="3" y="7" width="2" height="2" fill="#999"/><rect x="3" y="10" width="2" height="2" fill="#111"/><rect x="6" y="5" width="4" height="1" fill="#777"/><rect x="6" y="8" width="4" height="1" fill="#777"/><rect x="6" y="11" width="4" height="1" fill="#777"/></svg>
<div class="lt" style="left:630px;top:148px;color:#000">Allow the use of remote paths in file shortcut icons</div>
<div class="lt" style="left:967px;top:148px;color:#000">Not configured</div>
<div class="lt" style="left:1150px;top:148px;color:#000">No</div>
<svg class="ic" style="left:613px;top:169px" width="14" height="16" viewBox="0 0 14 16"><path d="M0.5 0.5h8l4 4v10h-12z" fill="#fff" stroke="#808080"/><path d="M8.5 0.5v4h4" fill="#f4f4f4" stroke="#a0a0a0"/><rect x="3" y="4" width="2" height="2" fill="#111"/><rect x="3" y="7" width="2" height="2" fill="#999"/><rect x="3" y="10" width="2" height="2" fill="#111"/><rect x="6" y="5" width="4" height="1" fill="#777"/><rect x="6" y="8" width="4" height="1" fill="#777"/><rect x="6" y="11" width="4" height="1" fill="#777"/></svg>
<div class="lt" style="left:630px;top:167px;color:#000">Configure Windows SmartScreen</div>
<div class="lt" style="left:967px;top:167px;color:#000">Not configured</div>
<div class="lt" style="left:1150px;top:167px;color:#000">No</div>
<svg class="ic" style="left:613px;top:188px" width="14" height="16" viewBox="0 0 14 16"><path d="M0.5 0.5h8l4 4v10h-12z" fill="#fff" stroke="#808080"/><path d="M8.5 0.5v4h4" fill="#f4f4f4" stroke="#a0a0a0"/><rect x="3" y="4" width="2" height="2" fill="#111"/><rect x="3" y="7" width="2" height="2" fill="#999"/><rect x="3" y="10" width="2" height="2" fill="#111"/><rect x="6" y="5" width="4" height="1" fill="#777"/><rect x="6" y="8" width="4" height="1" fill="#777"/><rect x="6" y="11" width="4" height="1" fill="#777"/></svg>
<div class="lt" style="left:630px;top:186px;color:#000">Disable binding directly to IPropertySetStorage without inter...</div>
<div class="lt" style="left:967px;top:186px;color:#000">Not configured</div>
<div class="lt" style="left:1150px;top:186px;color:#000">No</div>
<svg class="ic" style="left:613px;top:207px" width="14" height="16" viewBox="0 0 14 16"><path d="M0.5 0.5h8l4 4v10h-12z" fill="#fff" stroke="#808080"/><path d="M8.5 0.5v4h4" fill="#f4f4f4" stroke="#a0a0a0"/><rect x="3" y="4" width="2" height="2" fill="#111"/><rect x="3" y="7" width="2" height="2" fill="#999"/><rect x="3" y="10" width="2" height="2" fill="#111"/><rect x="6" y="5" width="4" height="1" fill="#777"/><rect x="6" y="8" width="4" height="1" fill="#777"/><rect x="6" y="11" width="4" height="1" fill="#777"/></svg>
<div class="lt" style="left:630px;top:205px;color:#000">Do not reinitialize a pre-existing roamed user profile when it ...</div>
<div class="lt" style="left:967px;top:205px;color:#000">Not configured</div>
<div class="lt" style="left:1150px;top:205px;color:#000">No</div>
<svg class="ic" style="left:613px;top:226px" width="14" height="16" viewBox="0 0 14 16"><path d="M0.5 0.5h8l4 4v10h-12z" fill="#fff" stroke="#808080"/><path d="M8.5 0.5v4h4" fill="#f4f4f4" stroke="#a0a0a0"/><rect x="3" y="4" width="2" height="2" fill="#111"/><rect x="3" y="7" width="2" height="2" fill="#999"/><rect x="3" y="10" width="2" height="2" fill="#111"/><rect x="6" y="5" width="4" height="1" fill="#777"/><rect x="6" y="8" width="4" height="1" fill="#777"/><rect x="6" y="11" width="4" height="1" fill="#777"/></svg>
<div class="lt" style="left:630px;top:224px;color:#000">Do not show the 'new application installed' notification</div>
<div class="lt" style="left:967px;top:224px;color:#000">Not configured</div>
<div class="lt" style="left:1150px;top:224px;color:#000">No</div>
<svg class="ic" style="left:613px;top:245px" width="14" height="16" viewBox="0 0 14 16"><path d="M0.5 0.5h8l4 4v10h-12z" fill="#fff" stroke="#808080"/><path d="M8.5 0.5v4h4" fill="#f4f4f4" stroke="#a0a0a0"/><rect x="3" y="4" width="2" height="2" fill="#111"/><rect x="3" y="7" width="2" height="2" fill="#999"/><rect x="3" y="10" width="2" height="2" fill="#111"/><rect x="6" y="5" width="4" height="1" fill="#777"/><rect x="6" y="8" width="4" height="1" fill="#777"/><rect x="6" y="11" width="4" height="1" fill="#777"/></svg>
<div class="lt" style="left:630px;top:243px;color:#000">Location where all default Library definition files for users/m...</div>
<div class="lt" style="left:967px;top:243px;color:#000">Not configured</div>
<div class="lt" style="left:1150px;top:243px;color:#000">No</div>
<div style="position:absolute;left:628px;top:262px;width:630px;height:19px;background:#3399ff;border:1px dotted #3a78bd"></div>
<svg class="ic" style="left:613px;top:264px" width="14" height="16" viewBox="0 0 14 16"><path d="M0.5 0.5h8l4 4v10h-12z" fill="#a9d1fa" stroke="#4f7fb5"/><path d="M8.5 0.5v4h4" fill="#b8dcfc" stroke="#6f9fd0"/><rect x="3" y="4" width="2" height="2" fill="#0d3b6e"/><rect x="3" y="7" width="2" height="2" fill="#5a8cc4"/><rect x="3" y="10" width="2" height="2" fill="#0d3b6e"/><rect x="6" y="5" width="4" height="1" fill="#3f6fa5"/><rect x="6" y="8" width="4" height="1" fill="#3f6fa5"/><rect x="6" y="11" width="4" height="1" fill="#3f6fa5"/></svg>
<div class="lt" style="left:630px;top:262px;color:#fff">Set a default associations configuration file</div>
<div class="lt" style="left:967px;top:262px;color:#fff">Not configured</div>
<div class="lt" style="left:1150px;top:262px;color:#fff">No</div>
<svg class="ic" style="left:613px;top:283px" width="14" height="16" viewBox="0 0 14 16"><path d="M0.5 0.5h8l4 4v10h-12z" fill="#fff" stroke="#808080"/><path d="M8.5 0.5v4h4" fill="#f4f4f4" stroke="#a0a0a0"/><rect x="3" y="4" width="2" height="2" fill="#111"/><rect x="3" y="7" width="2" height="2" fill="#999"/><rect x="3" y="10" width="2" height="2" fill="#111"/><rect x="6" y="5" width="4" height="1" fill="#777"/><rect x="6" y="8" width="4" height="1" fill="#777"/><rect x="6" y="11" width="4" height="1" fill="#777"/></svg>
<div class="lt" style="left:630px;top:281px;color:#000">Set a support web page link</div>
<div class="lt" style="left:967px;top:281px;color:#000">Not configured</div>
<div class="lt" style="left:1150px;top:281px;color:#000">No</div>
<svg class="ic" style="left:613px;top:302px" width="14" height="16" viewBox="0 0 14 16"><path d="M0.5 0.5h8l4 4v10h-12z" fill="#fff" stroke="#808080"/><path d="M8.5 0.5v4h4" fill="#f4f4f4" stroke="#a0a0a0"/><rect x="3" y="4" width="2" height="2" fill="#111"/><rect x="3" y="7" width="2" height="2" fill="#999"/><rect x="3" y="10" width="2" height="2" fill="#111"/><rect x="6" y="5" width="4" height="1" fill="#777"/><rect x="6" y="8" width="4" height="1" fill="#777"/><rect x="6" y="11" width="4" height="1" fill="#777"/></svg>
<div class="lt" style="left:630px;top:300px;color:#000">Show hibernate in the power options menu</div>
<div class="lt" style="left:967px;top:300px;color:#000">Not configured</div>
<div class="lt" style="left:1150px;top:300px;color:#000">No</div>
<svg class="ic" style="left:613px;top:321px" width="14" height="16" viewBox="0 0 14 16"><path d="M0.5 0.5h8l4 4v10h-12z" fill="#fff" stroke="#808080"/><path d="M8.5 0.5v4h4" fill="#f4f4f4" stroke="#a0a0a0"/><rect x="3" y="4" width="2" height="2" fill="#111"/><rect x="3" y="7" width="2" height="2" fill="#999"/><rect x="3" y="10" width="2" height="2" fill="#111"/><rect x="6" y="5" width="4" height="1" fill="#777"/><rect x="6" y="8" width="4" height="1" fill="#777"/><rect x="6" y="11" width="4" height="1" fill="#777"/></svg>
<div class="lt" style="left:630px;top:319px;color:#000">Show lock in the user tile menu</div>
<div class="lt" style="left:967px;top:319px;color:#000">Not configured</div>
<div class="lt" style="left:1150px;top:319px;color:#000">No</div>
<svg class="ic" style="left:613px;top:340px" width="14" height="16" viewBox="0 0 14 16"><path d="M0.5 0.5h8l4 4v10h-12z" fill="#fff" stroke="#808080"/><path d="M8.5 0.5v4h4" fill="#f4f4f4" stroke="#a0a0a0"/><rect x="3" y="4" width="2" height="2" fill="#111"/><rect x="3" y="7" width="2" height="2" fill="#999"/><rect x="3" y="10" width="2" height="2" fill="#111"/><rect x="6" y="5" width="4" height="1" fill="#777"/><rect x="6" y="8" width="4" height="1" fill="#777"/><rect x="6" y="11" width="4" height="1" fill="#777"/></svg>
<div class="lt" style="left:630px;top:338px;color:#000">Show sleep in the power options menu</div>
<div class="lt" style="left:967px;top:338px;color:#000">Not configured</div>
<div class="lt" style="left:1150px;top:338px;color:#000">No</div>
<svg class="ic" style="left:613px;top:359px" width="14" height="16" viewBox="0 0 14 16"><path d="M0.5 0.5h8l4 4v10h-12z" fill="#fff" stroke="#808080"/><path d="M8.5 0.5v4h4" fill="#f4f4f4" stroke="#a0a0a0"/><rect x="3" y="4" width="2" height="2" fill="#111"/><rect x="3" y="7" width="2" height="2" fill="#999"/><rect x="3" y="10" width="2" height="2" fill="#111"/><rect x="6" y="5" width="4" height="1" fill="#777"/><rect x="6" y="8" width="4" height="1" fill="#777"/><rect x="6" y="11" width="4" height="1" fill="#777"/></svg>
<div class="lt" style="left:630px;top:357px;color:#000">Start File Explorer with ribbon minimized</div>
<div class="lt" style="left:967px;top:357px;color:#000">Not configured</div>
<div class="lt" style="left:1150px;top:357px;color:#000">No</div>
<svg class="ic" style="left:613px;top:378px" width="14" height="16" viewBox="0 0 14 16"><path d="M0.5 0.5h8l4 4v10h-12z" fill="#fff" stroke="#808080"/><path d="M8.5 0.5v4h4" fill="#f4f4f4" stroke="#a0a0a0"/><rect x="3" y="4" width="2" height="2" fill="#111"/><rect x="3" y="7" width="2" height="2" fill="#999"/><rect x="3" y="10" width="2" height="2" fill="#111"/><rect x="6" y="5" width="4" height="1" fill="#777"/><rect x="6" y="8" width="4" height="1" fill="#777"/><rect x="6" y="11" width="4" height="1" fill="#777"/></svg>
<div class="lt" style="left:630px;top:376px;color:#000">Turn off Data Execution Prevention for Explorer</div>
<div class="lt" style="left:967px;top:376px;color:#000">Not configured</div>
<div class="lt" style="left:1150px;top:376px;color:#000">No</div>
<svg class="ic" style="left:613px;top:397px" width="14" height="16" viewBox="0 0 14 16"><path d="M0.5 0.5h8l4 4v10h-12z" fill="#fff" stroke="#808080"/><path d="M8.5 0.5v4h4" fill="#f4f4f4" stroke="#a0a0a0"/><rect x="3" y="4" width="2" height="2" fill="#111"/><rect x="3" y="7" width="2" height="2" fill="#999"/><rect x="3" y="10" width="2" height="2" fill="#111"/><rect x="6" y="5" width="4" height="1" fill="#777"/><rect x="6" y="8" width="4" height="1" fill="#777"/><rect x="6" y="11" width="4" height="1" fill="#777"/></svg>
<div class="lt" style="left:630px;top:395px;color:#000">Turn off heap termination on corruption</div>
<div class="lt" style="left:967px;top:395px;color:#000">Not configured</div>
<div class="lt" style="left:1150px;top:395px;color:#000">No</div>
<svg class="ic" style="left:613px;top:416px" width="14" height="16" viewBox="0 0 14 16"><path d="M0.5 0.5h8l4 4v10h-12z" fill="#fff" stroke="#808080"/><path d="M8.5 0.5v4h4" fill="#f4f4f4" stroke="#a0a0a0"/><rect x="3" y="4" width="2" height="2" fill="#111"/><rect x="3" y="7" width="2" height="2" fill="#999"/><rect x="3" y="10" width="2" height="2" fill="#111"/><rect x="6" y="5" width="4" height="1" fill="#777"/><rect x="6" y="8" width="4" height="1" fill="#777"/><rect x="6" y="11" width="4" height="1" fill="#777"/></svg>
<div class="lt" style="left:630px;top:414px;color:#000">Turn off numerical sorting in File Explorer</div>
<div class="lt" style="left:967px;top:414px;color:#000">Not configured</div>
<div class="lt" style="left:1150px;top:414px;color:#000">No</div>
<svg class="ic" style="left:613px;top:435px" width="14" height="16" viewBox="0 0 14 16"><path d="M0.5 0.5h8l4 4v10h-12z" fill="#fff" stroke="#808080"/><path d="M8.5 0.5v4h4" fill="#f4f4f4" stroke="#a0a0a0"/><rect x="3" y="4" width="2" height="2" fill="#111"/><rect x="3" y="7" width="2" height="2" fill="#999"/><rect x="3" y="10" width="2" height="2" fill="#111"/><rect x="6" y="5" width="4" height="1" fill="#777"/><rect x="6" y="8" width="4" height="1" fill="#777"/><rect x="6" y="11" width="4" height="1" fill="#777"/></svg>
<div class="lt" style="left:630px;top:433px;color:#000">Turn off shell protocol protected mode</div>
<div class="lt" style="left:967px;top:433px;color:#000">Not configured</div>
<div class="lt" style="left:1150px;top:433px;color:#000">No</div>
<svg class="ic" style="left:613px;top:454px" width="14" height="16" viewBox="0 0 14 16"><path d="M0.5 0.5h8l4 4v10h-12z" fill="#fff" stroke="#808080"/><path d="M8.5 0.5v4h4" fill="#f4f4f4" stroke="#a0a0a0"/><rect x="3" y="4" width="2" height="2" fill="#111"/><rect x="3" y="7" width="2" height="2" fill="#999"/><rect x="3" y="10" width="2" height="2" fill="#111"/><rect x="6" y="5" width="4" height="1" fill="#777"/><rect x="6" y="8" width="4" height="1" fill="#777"/><rect x="6" y="11" width="4" height="1" fill="#777"/></svg>
<div class="lt" style="left:630px;top:452px;color:#000">Verify old and new Folder Redirection targets point to the sa...</div>
<div class="lt" style="left:967px;top:452px;color:#000">Not configured</div>
<div class="lt" style="left:1150px;top:452px;color:#000">No</div>

<!-- tabs strip -->
<div class="a" style="left:8px;top:721px;width:384px;height:1px;background:#9a9a9a"></div>
<div class="a" style="left:396px;top:701px;width:866px;height:21px;background:#f0f0f0;border-bottom:1px solid #a0a0a0"></div>
<div class="a" style="left:396px;top:702px;width:866px;height:1px;background:#5a5a5a"></div>
<svg class="ic" style="left:391px;top:700px" width="150" height="22" viewBox="391 700 150 22"><path d="M461 720.5L461.5 702.5H528.5L520.5 720.5Z" fill="#f0f0f0"/><path d="M461.5 702.5L467.5 720.5M461.5 702.5H528.5L520.5 720.5" fill="none" stroke="#6a6a6a"/><path d="M394 700.5H466.5L458.5 720.5H402.8Z" fill="#fff"/><path d="M394.5 701.5L402.8 720.5" stroke="#444" stroke-width="0.9" stroke-dasharray="1.3 0.5"/><path d="M466.5 702L458.5 720.5" stroke="#555"/><path d="M391 721.5H540" stroke="#a0a0a0"/></svg>
<div class="a" style="left:406px;top:704px;font-size:12px;line-height:17px">Extended</div>
<div class="a" style="left:470px;top:704px;font-size:12px;line-height:17px">Standard</div>

<!-- status bar -->
<div class="a" style="left:8px;top:722px;width:1254px;height:21px;background:#fff"></div>
<div class="a" style="left:10px;top:726px;line-height:16px">17 setting(s)</div>
<div class="a" style="left:1041px;top:724px;width:1px;height:18px;background:#d8d8d8"></div>
<div class="a" style="left:1174px;top:724px;width:1px;height:18px;background:#d8d8d8"></div>
<div class="a" style="left:1259px;top:724px;width:1px;height:18px;background:#d8d8d8"></div>
</body></html>
